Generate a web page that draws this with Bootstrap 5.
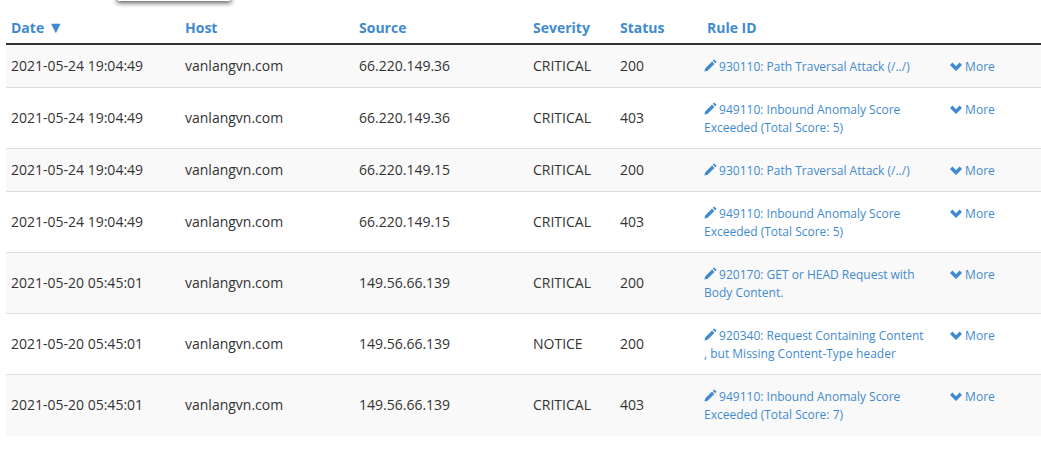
<!DOCTYPE html>
<html lang="en">
<head>
<meta charset="utf-8">
<title>Rule events</title>
<link href="https://cdn.jsdelivr.net/npm/bootstrap@5.3.0/dist/css/bootstrap.min.css" rel="stylesheet">
<style>
html, body { background: #fff; }
body { font-family: "Open Sans", sans-serif; font-size: 14px; line-height: 18px; color: #333; overflow: hidden; height: 449px; }
.page-wrap { padding: 0 0 0 6px; position: relative; }
.popup-edge { position: absolute; left: 118px; top: -8px; width: 112px; height: 9px; background: #fff; box-shadow: 0 1px 5px 1px rgba(0,0,0,.65); }
.log-table { --bs-table-striped-bg: #f9f9f9; --bs-table-color: #333; --bs-table-striped-color: #333; table-layout: fixed; width: 1035px; margin: 0; border-color: #ddd; font-size: 14px; line-height: 18px; }
.log-table thead th { height: 44px; padding: 17px 5px 6px; border-bottom: 2px solid #333; color: #3f8acf; font-weight: 700; vertical-align: bottom; }
.log-table tbody td { padding: 12px 5px; vertical-align: middle; border-bottom: 1px solid #ddd; }
.log-table tbody tr.final-row td { border-bottom: 0; padding-bottom: 13px; }
.log-table tbody td.rule-cell { padding: 13px 5px 11px 2px; vertical-align: top; font-size: 12px; }
.log-table tbody tr.final-row td.rule-cell { padding-bottom: 12px; }
.log-table a { color: #3f8acf; text-decoration: none; }
.rule-link { width: 246px; padding-right: 24px; flex: none; }
.glyph { display: inline-block; fill: #3f8acf; vertical-align: -1px; margin-right: -1px; }
.glyph.chev { margin-right: 0; vertical-align: 0; }
.sort-arrow { font-size: 16px; line-height: 18px; }
</style>
</head>
<body>
<div class="page-wrap">
<div class="popup-edge"></div>
<table class="table table-striped log-table">
<colgroup>
<col style="width:174px"><col style="width:174px"><col style="width:174px"><col style="width:87px"><col style="width:87px"><col>
</colgroup>
<thead>
<tr><th><a href="#">Date <span class="sort-arrow">▼</span></a></th><th><a href="#">Host</a></th><th><a href="#">Source</a></th><th><a href="#">Severity</a></th><th><a href="#">Status</a></th><th><a href="#">Rule ID</a></th></tr>
</thead>
<tbody id="rows">
<tr><td>2021-05-24 19:04:49</td><td>vanlangvn.com</td><td>66.220.149.36</td><td>CRITICAL</td><td>200</td>
<td class="rule-cell"><div class="d-flex"><a class="rule-link" href="#"><svg class="glyph" width="13" height="13" viewBox="0 0 13 13"><path d="M10.2.4 12.6 2.8 11.2 4.2 8.8 1.8zM8 2.6 10.4 5 3.6 11.8.4 12.6 1.2 9.4z"/></svg> 930110: Path Traversal Attack (/../)</a><a href="#"><svg class="glyph chev" width="12" height="9" viewBox="0 0 12 9"><path d="M0 3 2.4 .6 6 4.2 9.6 .6 12 3 6 9z"/></svg> More</a></div></td></tr>
<tr><td>2021-05-24 19:04:49</td><td>vanlangvn.com</td><td>66.220.149.36</td><td>CRITICAL</td><td>403</td>
<td class="rule-cell"><div class="d-flex"><a class="rule-link" href="#"><svg class="glyph" width="13" height="13" viewBox="0 0 13 13"><path d="M10.2.4 12.6 2.8 11.2 4.2 8.8 1.8zM8 2.6 10.4 5 3.6 11.8.4 12.6 1.2 9.4z"/></svg> 949110: Inbound Anomaly Score Exceeded (Total Score: 5)</a><a href="#"><svg class="glyph chev" width="12" height="9" viewBox="0 0 12 9"><path d="M0 3 2.4 .6 6 4.2 9.6 .6 12 3 6 9z"/></svg> More</a></div></td></tr>
<tr><td>2021-05-24 19:04:49</td><td>vanlangvn.com</td><td>66.220.149.15</td><td>CRITICAL</td><td>200</td>
<td class="rule-cell"><div class="d-flex"><a class="rule-link" href="#"><svg class="glyph" width="13" height="13" viewBox="0 0 13 13"><path d="M10.2.4 12.6 2.8 11.2 4.2 8.8 1.8zM8 2.6 10.4 5 3.6 11.8.4 12.6 1.2 9.4z"/></svg> 930110: Path Traversal Attack (/../)</a><a href="#"><svg class="glyph chev" width="12" height="9" viewBox="0 0 12 9"><path d="M0 3 2.4 .6 6 4.2 9.6 .6 12 3 6 9z"/></svg> More</a></div></td></tr>
<tr><td>2021-05-24 19:04:49</td><td>vanlangvn.com</td><td>66.220.149.15</td><td>CRITICAL</td><td>403</td>
<td class="rule-cell"><div class="d-flex"><a class="rule-link" href="#"><svg class="glyph" width="13" height="13" viewBox="0 0 13 13"><path d="M10.2.4 12.6 2.8 11.2 4.2 8.8 1.8zM8 2.6 10.4 5 3.6 11.8.4 12.6 1.2 9.4z"/></svg> 949110: Inbound Anomaly Score Exceeded (Total Score: 5)</a><a href="#"><svg class="glyph chev" width="12" height="9" viewBox="0 0 12 9"><path d="M0 3 2.4 .6 6 4.2 9.6 .6 12 3 6 9z"/></svg> More</a></div></td></tr>
<tr><td>2021-05-20 05:45:01</td><td>vanlangvn.com</td><td>149.56.66.139</td><td>CRITICAL</td><td>200</td>
<td class="rule-cell"><div class="d-flex"><a class="rule-link" href="#"><svg class="glyph" width="13" height="13" viewBox="0 0 13 13"><path d="M10.2.4 12.6 2.8 11.2 4.2 8.8 1.8zM8 2.6 10.4 5 3.6 11.8.4 12.6 1.2 9.4z"/></svg> 920170: GET or HEAD Request with Body Content.</a><a href="#"><svg class="glyph chev" width="12" height="9" viewBox="0 0 12 9"><path d="M0 3 2.4 .6 6 4.2 9.6 .6 12 3 6 9z"/></svg> More</a></div></td></tr>
<tr><td>2021-05-20 05:45:01</td><td>vanlangvn.com</td><td>149.56.66.139</td><td>NOTICE</td><td>200</td>
<td class="rule-cell"><div class="d-flex"><a class="rule-link" href="#"><svg class="glyph" width="13" height="13" viewBox="0 0 13 13"><path d="M10.2.4 12.6 2.8 11.2 4.2 8.8 1.8zM8 2.6 10.4 5 3.6 11.8.4 12.6 1.2 9.4z"/></svg> 920340: Request Containing Content , but Missing Content-Type header</a><a href="#"><svg class="glyph chev" width="12" height="9" viewBox="0 0 12 9"><path d="M0 3 2.4 .6 6 4.2 9.6 .6 12 3 6 9z"/></svg> More</a></div></td></tr>
<tr class="final-row"><td>2021-05-20 05:45:01</td><td>vanlangvn.com</td><td>149.56.66.139</td><td>CRITICAL</td><td>403</td>
<td class="rule-cell"><div class="d-flex"><a class="rule-link" href="#"><svg class="glyph" width="13" height="13" viewBox="0 0 13 13"><path d="M10.2.4 12.6 2.8 11.2 4.2 8.8 1.8zM8 2.6 10.4 5 3.6 11.8.4 12.6 1.2 9.4z"/></svg> 949110: Inbound Anomaly Score Exceeded (Total Score: 7)</a><a href="#"><svg class="glyph chev" width="12" height="9" viewBox="0 0 12 9"><path d="M0 3 2.4 .6 6 4.2 9.6 .6 12 3 6 9z"/></svg> More</a></div></td></tr>
</tbody>
</table>
</div>
<script src="https://cdn.jsdelivr.net/npm/bootstrap@5.3.0/dist/js/bootstrap.bundle.min.js"></script>
</body>
</html>
